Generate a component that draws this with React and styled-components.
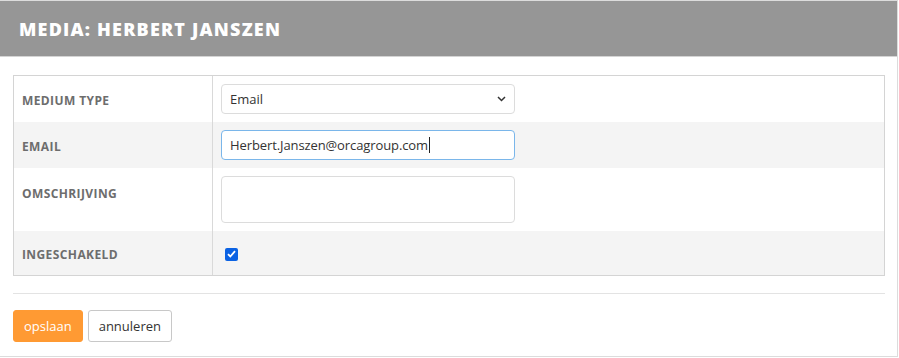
import React from "react";
import styled, { createGlobalStyle } from "styled-components";

const Global = createGlobalStyle`
  body {
    margin: 0;
    background: #fff;
    font-family: "Open Sans", "Noto Sans", sans-serif;
  }
`;

const Panel = styled.div`
  width: 898px;
  height: 357px;
  box-sizing: border-box;
  border-top: 1px solid #dcdcdc;
  border-right: 1px solid #dcdcdc;
  border-bottom: 1px solid #dcdcdc;
  display: flex;
  flex-direction: column;
`;

const Header = styled.div`
  height: 56px;
  background: #969696;
  border-bottom: 1px solid #d4d4d4;
  display: flex;
  align-items: center;
  padding: 0 19px;
  box-sizing: border-box;
`;

const Title = styled.h1`
  margin: 0;
  font-size: 18px;
  font-weight: 800;
  color: #fff;
  letter-spacing: 1.2px;
  text-transform: uppercase;
`;

const Body = styled.div`
  padding: 18px 12px 0 13px;
`;

const Table = styled.div`
  border: 1px solid #d4d4d4;
  display: grid;
  grid-template-columns: 199px 1fr;
`;

const Label = styled.div`
  background: ${(p) => (p.$alt ? "#f4f4f4" : "#fff")};
  border-right: 1px solid #d9d9d9;
  height: ${(p) => p.$h}px;
  box-sizing: border-box;
  padding: ${(p) => (p.$top ? "17px" : "2px")} 8px 0 8px;
  display: flex;
  align-items: ${(p) => (p.$top ? "flex-start" : "center")};
  font-size: 12px;
  font-weight: 700;
  color: #6d6d6d;
  letter-spacing: 0.4px;
  text-transform: uppercase;
`;

const Cell = styled.div`
  background: ${(p) => (p.$alt ? "#f4f4f4" : "#fff")};
  height: ${(p) => p.$h}px;
  box-sizing: border-box;
  padding: 0 8px;
  display: flex;
  align-items: center;
`;

const fieldBase = `
  width: 294px;
  box-sizing: border-box;
  border: 1px solid #dcdcdc;
  border-radius: 4px;
  background: #fff;
  font-family: "Open Sans", "Noto Sans", sans-serif;
  font-size: 13px;
  color: #333;
  padding: 0 8px;
  outline: none;
`;

const SelectBox = styled.div`
  ${fieldBase}
  height: 30px;
  display: flex;
  align-items: center;
  justify-content: space-between;
`;

const Input = styled.div`
  ${fieldBase}
  height: 30px;
  display: flex;
  align-items: center;
  border-color: #7ab6ea;
  letter-spacing: -0.1px;
`;

const Caret = styled.span`
  display: inline-block;
  width: 1px;
  height: 16px;
  background: #222;
  margin-left: 1px;
`;

const TextArea = styled.div`
  ${fieldBase}
  height: 47px;
`;

const Check = styled.span`
  width: 13px;
  height: 13px;
  border-radius: 2px;
  background: #0b62e3;
  margin: 2px 0 0 4px;
  display: flex;
  align-items: center;
  justify-content: center;
`;

const Divider = styled.hr`
  border: 0;
  border-top: 1px solid #e3e3e3;
  margin: 17px 0 16px 0;
`;

const Actions = styled.div`
  display: flex;
  gap: 5px;
`;

const Button = styled.button`
  height: 32px;
  padding: 0 10px;
  font-family: "Open Sans", "Noto Sans", sans-serif;
  font-size: 13px;
  border-radius: 3px;
  border: 1px solid ${(p) => (p.$primary ? "#ff9a33" : "#c8c8c8")};
  background: ${(p) => (p.$primary ? "#ff9a33" : "#fff")};
  color: ${(p) => (p.$primary ? "#fff" : "#333")};
`;

export default function App() {
  return (
    <>
      <Global />
      <Panel>
        <Header>
          <Title>Media: Herbert Janszen</Title>
        </Header>
        <Body>
          <Table>
            <Label $h={46}>Medium type</Label>
            <Cell $h={46}>
              <SelectBox>
                <span>Email</span>
                <svg width="9" height="6" viewBox="0 0 9 6">
                  <path d="M1 1l3.5 3.5L8 1" fill="none" stroke="#333" strokeWidth="1.5" />
                </svg>
              </SelectBox>
            </Cell>
            <Label $h={46} $alt>Email</Label>
            <Cell $h={46} $alt>
              <Input>
                Herbert.Janszen@orcagroup.com
                <Caret />
              </Input>
            </Cell>
            <Label $h={63} $top>Omschrijving</Label>
            <Cell $h={63}>
              <TextArea />
            </Cell>
            <Label $h={44} $alt>Ingeschakeld</Label>
            <Cell $h={44} $alt>
              <Check>
                <svg width="9" height="8" viewBox="0 0 9 8">
                  <path d="M1 4.2l2.3 2.3L8 1.2" fill="none" stroke="#fff" strokeWidth="1.8" />
                </svg>
              </Check>
            </Cell>
          </Table>
          <Divider />
          <Actions>
            <Button $primary>opslaan</Button>
            <Button>annuleren</Button>
          </Actions>
        </Body>
      </Panel>
    </>
  );
}
